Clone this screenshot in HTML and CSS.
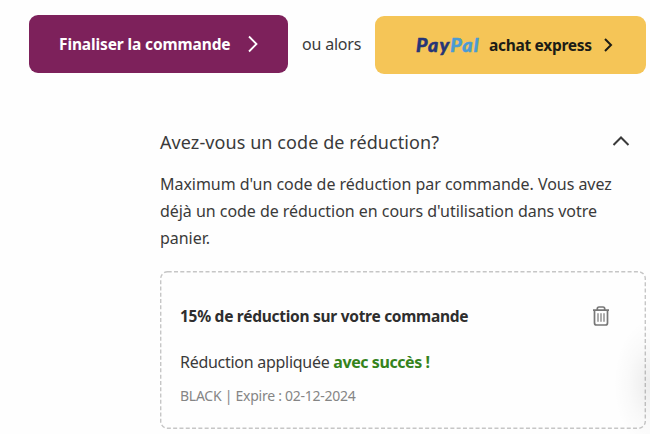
FILE: index.html
```html
<!DOCTYPE html>
<html lang="fr">
<head>
  <meta charset="UTF-8">
  <meta name="viewport" content="width=device-width, initial-scale=1.0">
  <title>Panier</title>
  <link rel="stylesheet" href="styles.css">
</head>
<body>
  <div class="actions">
    <button class="btn btn-checkout">
      <span class="checkout-label">Finaliser la commande</span>
      <svg class="chevron" width="12" height="18" viewBox="0 0 12 18"><path d="M2 1.5l7.5 7.5L2 16.5"/></svg>
    </button>
    <span class="or">ou alors</span>
    <button class="btn btn-paypal">
      <span class="paypal"><span class="pay">Pay</span><span class="pal">Pal</span></span>
      <span class="paypal-label">achat express</span>
      <svg class="chevron chevron-dark" width="10" height="16" viewBox="0 0 10 16"><path d="M2 2l6 6-6 6"/></svg>
    </button>
  </div>
  <section class="promo">
    <div class="promo-header">
      <h2>Avez-vous un code de réduction?</h2>
      <svg class="toggle" width="18" height="12" viewBox="0 0 18 12"><path d="M1.500 9L9 1.500l7.500 7.500"/></svg>
    </div>
    <p class="promo-text">Maximum d'un code de réduction par commande. Vous avez déjà un code de réduction en cours d'utilisation dans votre panier.</p>
    <div class="coupon">
      <svg class="coupon-border" width="486" height="158"><rect x="0.7" y="0.7" width="484.600" height="156.600" rx="7"/></svg>
      <div class="coupon-header">
        <h3>15% de réduction sur votre commande</h3>
        <svg class="trash" width="18" height="20" viewBox="0 0 18 20">
          <path d="M1 4.200h16M5.300 4V2.800Q5.300 1 7 1h4q1.700 0 1.700 1.800V4M2.500 4.500v12.500q0 2 2 2h9q2 0 2-2V4.500"/>
          <path class="trash-lines" d="M6 7.300v8.500M9 7.300v8.500M12 7.300v8.500"/>
        </svg>
      </div>
      <p class="coupon-status">Réduction appliquée <strong>avec succès !</strong></p>
      <p class="coupon-info">BLACK | Expire : 02-12-2024</p>
    </div>
  </section>
  <div class="edge-shadow"></div>
</body>
</html>
```
FILE: styles.css
```css
* {
  box-sizing: border-box;
}
body {
  margin: 0;
  padding: 15px 4px 0 29px;
  height: 434px;
  overflow: hidden;
  position: relative;
  background-color: #fefefe;
  color: #3a3a3a;
  font-family: "Noto Sans", sans-serif;
}
h2, h3, p {
  margin: 0;
  white-space: nowrap;
}
svg {
  fill: none;
  flex-shrink: 0;
}
.actions {
  display: flex;
  align-items: flex-start;
  height: 59px;
}
.btn {
  display: flex;
  align-items: center;
  height: 58px;
  padding: 0;
  border: none;
  border-radius: 9px;
  font-family: inherit;
  font-size: 15.5px;
  font-weight: bold;
  letter-spacing: -0.12px;
  white-space: nowrap;
}
.btn-checkout {
  width: 259px;
  padding-left: 30px;
  background-color: #7d215b;
  color: #fff;
}
.checkout-label {
  width: 171px;
  text-align: left;
}
.btn-checkout .chevron {
  margin-left: 17px;
}
.chevron {
  stroke: #fff;
  stroke-width: 1.8;
}
.chevron-dark {
  stroke: #1c1c16;
  stroke-width: 2;
}
.or {
  width: 87px;
  padding-left: 14px;
  font-size: 16px;
  letter-spacing: -0.2px;
  line-height: 59px;
  white-space: nowrap;
}
.btn-paypal {
  width: 271px;
  margin-top: 1px;
  padding-left: 41px;
  background-color: #f5c557;
  color: #1c1c16;
  letter-spacing: -0.3px;
}
.paypal {
  width: 73px;
  margin-top: -2px;
  font-family: Lato, sans-serif;
  font-size: 19.5px;
  font-weight: 900;
  font-style: italic;
  letter-spacing: 1.2px;
  text-align: left;
  -webkit-text-stroke: 0.5px;
}
.pay {
  color: #263577;
}
.pal {
  color: #4b9bd3;
}
.paypal-label {
  width: 104px;
  text-align: left;
}
.btn-paypal .chevron {
  margin-left: 10px;
}
.promo {
  margin-left: 131px;
}
.promo-header {
  display: flex;
  align-items: center;
  justify-content: space-between;
  height: 30px;
  margin-top: 53px;
  padding-right: 16px;
}
.promo-header h2 {
  font-size: 18px;
  font-weight: normal;
  letter-spacing: 0.08px;
}
.toggle {
  stroke: #3a3a3a;
  stroke-width: 2;
}
.promo-text {
  width: 470px;
  margin-top: 14px;
  font-size: 16px;
  letter-spacing: -0.04px;
  line-height: 27px;
  white-space: normal;
}
.coupon {
  position: relative;
  height: 158px;
  margin-top: 19px;
  padding: 32px 36px 0 20px;
}
.coupon-border {
  position: absolute;
  left: 0;
  top: 0;
  stroke: #c6c6c6;
  stroke-width: 1.4;
  stroke-dasharray: 4 2.3;
}
.coupon-header {
  display: flex;
  align-items: center;
  justify-content: space-between;
  height: 26px;
}
.coupon h3 {
  font-size: 15.5px;
  letter-spacing: -0.28px;
  color: #2e2e2e;
}
.trash {
  stroke: #777;
  stroke-width: 1.7;
}
.trash-lines {
  stroke-width: 1.2;
}
.coupon-status {
  margin-top: 20px;
  font-size: 16px;
  letter-spacing: -0.28px;
  line-height: 26px;
}
.coupon-status strong {
  color: #35831c;
  letter-spacing: -0.42px;
}
.coupon-info {
  margin-top: 11px;
  color: #858585;
  font-size: 14px;
  letter-spacing: -0.26px;
  line-height: 20px;
}
.edge-shadow {
  position: absolute;
  right: 0;
  top: 320px;
  width: 36px;
  height: 114px;
  background: radial-gradient(ellipse 36px 64px at 100% 56%, rgba(0, 0, 0, 0.07), rgba(0, 0, 0, 0.02) 60%, rgba(0, 0, 0, 0));
}
```
